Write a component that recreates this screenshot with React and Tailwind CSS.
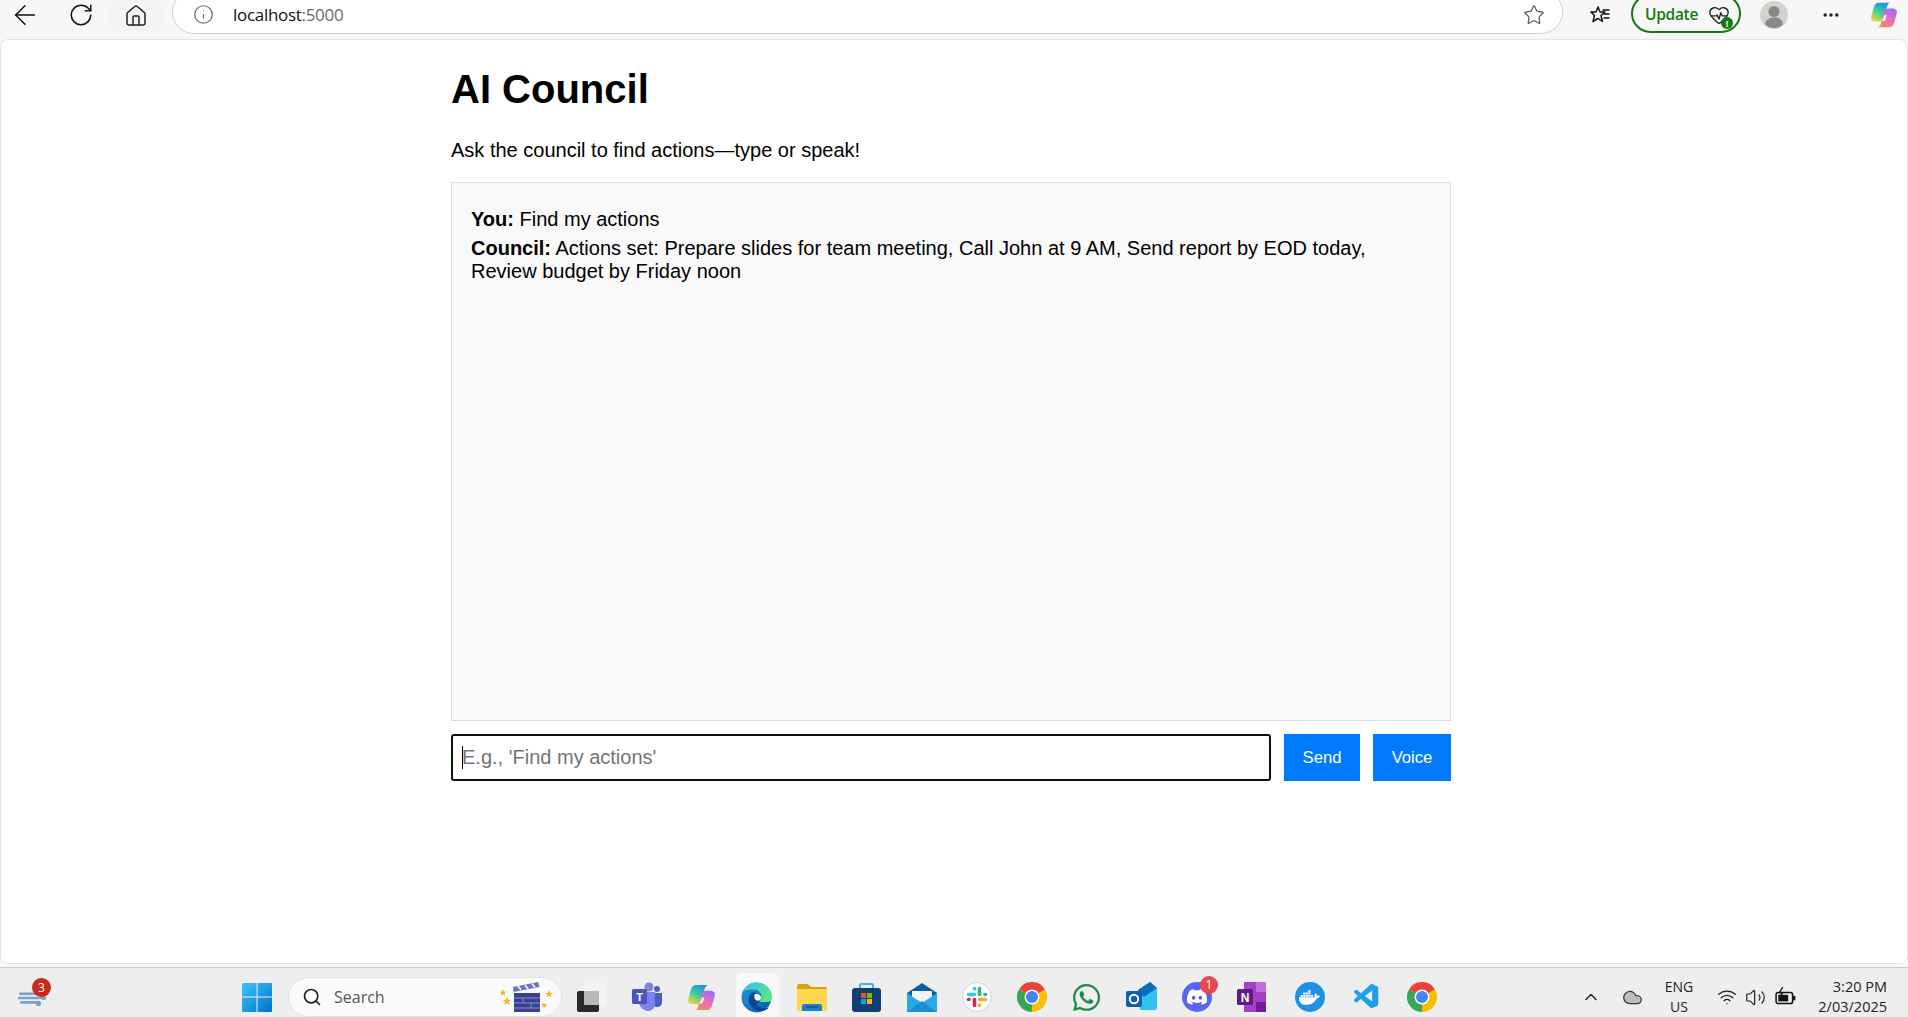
import { ArrowLeft, RotateCw, House, Info, Star, Ellipsis, HeartPulse, Search, ChevronUp, Cloud, Wifi, Volume2 } from "lucide-react"
import { FaWhatsapp, FaDiscord, FaDocker } from "react-icons/fa"
import { VscVscode } from "react-icons/vsc"

// Browser toolbar bits
const FavoritesIcon = () => (
  <svg width="20" height="20" viewBox="0 0 20 20" fill="none" stroke="#111" strokeWidth="1.5" strokeLinejoin="round">
    <path d="M8 2l2 5h5l-4 3.5 1.5 6L8 13.5 3 16.5l1.5-6L1 7h5z" />
    <path d="M13 5h6M14 9h5M14 13h5" strokeLinecap="round" />
  </svg>
)

const Avatar = () => (
  <svg width="28" height="28" viewBox="0 0 28 28">
    <circle cx="14" cy="14" r="14" fill="#d4d2cf" />
    <circle cx="14" cy="10.5" r="5.5" fill="#8a8886" />
    <path d="M5 23c1-5 5-6.5 9-6.5s8 1.5 9 6.5c-2 2.5-5.500 4-9 4s-7-1.500-9-4z" fill="#8a8886" />
  </svg>
)

const CopilotIcon = ({ id, size = 28 }) => (
  <svg width={size} height={size} viewBox="0 0 30 30">
    <defs>
      <linearGradient id={id + "a"} x1="0.7" y1="0" x2="0.2" y2="1">
        <stop offset="0" stopColor="#1f8fe8" />
        <stop offset="0.5" stopColor="#3fcf9a" />
        <stop offset="1" stopColor="#f5d63d" />
      </linearGradient>
      <linearGradient id={id + "b"} x1="0.7" y1="0" x2="0.3" y2="1">
        <stop offset="0" stopColor="#9a6cf0" />
        <stop offset="0.55" stopColor="#e86fc0" />
        <stop offset="1" stopColor="#fb8a4a" />
      </linearGradient>
    </defs>
    <path d="M9 2H21C19.500 3 18.500 5 18 7L14.500 19C14 21 12.500 22 10.500 22H5.500C2.500 22 .5 19.500 1.300 16.500L4 7C4.800 4 6.500 2 9 2z" fill={`url(#${id}a)`} />
    <path d="M21 28H9C10.500 27 11.500 25 12 23L15.500 11C16 9 17.500 8 19.500 8H24.500C27.500 8 29.500 10.500 28.700 13.500L26 23C25.200 26 23.500 28 21 28z" fill={`url(#${id}b)`} />
    <path d="M15.500 15h2.500l-1.500 5c-.3 1-1 1.500-2 1.500h-2z" fill="#fff" opacity="0.85" />
  </svg>
)

// Taskbar app icons
const WeatherIcon = () => (
  <svg width="28" height="22" viewBox="0 0 26 20" fill="none" stroke="#7f9fc4" strokeWidth="2.4" strokeLinecap="round">
    <path d="M2 7h16M1 11h24M3 15h15" />
    <circle cx="24" cy="11" r="2" fill="#7f9fc4" stroke="none" />
    <circle cx="19" cy="16" r="2.500" fill="#7f9fc4" stroke="none" />
  </svg>
)

const WindowsIcon = () => (
  <svg width="30" height="30" viewBox="0 0 30 30">
    <defs>
      <linearGradient id="win" x1="0" y1="0" x2="1" y2="1">
        <stop offset="0" stopColor="#3fc5f8" />
        <stop offset="1" stopColor="#0070d0" />
      </linearGradient>
    </defs>
    <path d="M1 1h13.500v13.500H0V2a1 1 0 0 1 1-1zM15.500 1H29a1 1 0 0 1 1 1v12.500H15.500zM0 15.500h14.500V30H1a1 1 0 0 1-1-1zM15.500 15.500H30V29a1 1 0 0 1-1 1H15.500z" fill="url(#win)" />
  </svg>
)

const ClapperIcon = () => (
  <svg width="56" height="30" viewBox="0 0 56 30">
    <g fill="#f2b632">
      <path d="M4 7l1 2.500 2.500.2-2 1.600.7 2.500L4 12.400l-2.200 1.400.7-2.500-2-1.600L3 9.500z" />
      <path d="M8 15l1.200 2.800 3 .2-2.300 1.900.8 3L8 21.300l-2.700 1.600.8-3L3.800 18l3-.2z" />
      <path d="M50 8l1.100 2.700 2.900.2-2.200 1.800.7 2.800L50 14l-2.500 1.500.7-2.800-2.200-1.800 2.900-.2z" />
      <path d="M45 20l.9 2.100 2.300.2-1.800 1.400.6 2.200L45 24.700l-2 1.200.6-2.200-1.800-1.400 2.300-.2z" />
    </g>
    <path d="M14 5l25-5 1.500 5-26 5z" fill="#6f73b8" />
    <path d="M19 4l3 4M26 3l3 4M33 1.500l3 4" stroke="#e8e8f4" strokeWidth="2" />
    <rect x="15" y="11" width="26" height="19" fill="#3b3f8f" />
    <path d="M15 16h26M15 21h26M15 26h26M24 16v5M32 21v5" stroke="#8d90cc" strokeWidth="1" />
  </svg>
)

const TaskViewIcon = () => (
  <svg width="29" height="29" viewBox="0 0 29 29">
    <rect x="7" y="0" width="22" height="22" rx="2" fill="#f4f4f4" />
    <rect x="0" y="8" width="22" height="21" rx="2" fill="#2a2a2a" />
    <rect x="7" y="8" width="15" height="14" fill="#b9b9b9" />
  </svg>
)

const TeamsIcon = () => (
  <svg width="30" height="30" viewBox="0 0 30 30">
    <circle cx="17" cy="5" r="4.500" fill="#7b83d6" />
    <circle cx="25" cy="7" r="3" fill="#5059c9" />
    <path d="M20 11h10v9c0 3-2 5-5 5-2 0-5-1-5-3z" fill="#5059c9" />
    <path d="M7 10h16v12c0 4-3 7-7 7s-7-3-9-7z" fill="#7b83eb" />
    <rect x="0" y="7" width="15" height="15" rx="1.500" fill="#4b53bc" />
    <text x="7.500" y="18.500" textAnchor="middle" fill="#fff" fontSize="11" fontWeight="700" fontFamily="Liberation Sans">T</text>
  </svg>
)

const EdgeIcon = () => (
  <svg width="31" height="31" viewBox="0 0 31 31">
    <defs>
      <linearGradient id="edgeA" x1="0" y1="0" x2="1" y2="1">
        <stop offset="0" stopColor="#1e9ae0" />
        <stop offset="1" stopColor="#0c59a4" />
      </linearGradient>
      <linearGradient id="edgeB" x1="0" y1="0" x2="1" y2="1">
        <stop offset="0" stopColor="#35c1f1" />
        <stop offset="1" stopColor="#66eb6e" />
      </linearGradient>
    </defs>
    <circle cx="15.500" cy="15.500" r="15" fill="url(#edgeA)" />
    <path d="M2 9C5 3 10 .5 15.500.5 24 .5 31 7 31 15c0 3-1.500 5-5 5h-6c-1 0-1.500-.5-1-1.500 1-1 1.500-2 1.500-3.500 0-4-3-7.500-7.500-7.500C8 7.500 4 8 2 9z" fill="url(#edgeB)" />
    <path d="M13 10c-4 1-6 5-5 10 1 5 6 9 12 9 3 0 6-1 8-3.500-2 .8-4 1-6 .5-4-.5-6-2.500-7-5 2 .8 3-.5 3-2 0-3-2-7-5-9z" fill="#0a4a8c" />
    <path d="M14 12c3-.5 6 1 6 4 0 1-1 2-2 2.500-2 .5-4-.5-4.500-2.500-.3-1.500-.2-3 .5-4z" fill="#fff" />
  </svg>
)

const FolderIcon = () => (
  <svg width="30" height="27" viewBox="0 0 30 27">
    <path d="M0 2a2 2 0 0 1 2-2h9l3 3h14a2 2 0 0 1 2 2v3H0z" fill="#d9a10c" />
    <path d="M0 5h30v22H0z" fill="#fdd64f" />
    <path d="M5 22a2 2 0 0 1 2-2h16a2 2 0 0 1 2 2v5H5z" fill="#1a7fd1" />
    <path d="M9 23h12" stroke="#0e4f8c" strokeWidth="1.500" />
  </svg>
)

const StoreIcon = () => (
  <svg width="29" height="29" viewBox="0 0 29 29">
    <path d="M8 5V2a1 1 0 0 1 1-1h11a1 1 0 0 1 1 1v3" fill="none" stroke="#38b6ee" strokeWidth="2" />
    <rect x="0" y="5" width="29" height="24" rx="3" fill="#123f73" />
    <rect x="9" y="10" width="5" height="5" fill="#f25022" />
    <rect x="15" y="10" width="5" height="5" fill="#7fba00" />
    <rect x="9" y="16" width="5" height="5" fill="#00a4ef" />
    <rect x="15" y="16" width="5" height="5" fill="#ffb900" />
  </svg>
)

const MailIcon = () => (
  <svg width="30" height="29" viewBox="0 0 30 29">
    <path d="M0 10L15 0l15 10v3H0z" fill="#0d5ca8" />
    <path d="M5 8h20v9H5z" fill="#f4f4f4" />
    <path d="M0 10l15 10 15-10v19H0z" fill="#29a8ea" />
    <path d="M0 29l15-11 15 11z" fill="#1b8ed6" />
  </svg>
)

const SlackIcon = () => (
  <svg width="30" height="30" viewBox="0 0 30 30" strokeLinecap="round" strokeWidth="3.600">
    <circle cx="15" cy="15" r="14.500" fill="#fff" stroke="#d2d2d2" strokeWidth="1" />
    <path d="M6.500 12.500h6" stroke="#36c5f0" />
    <path d="M12.500 6.500v.5" stroke="#36c5f0" />
    <path d="M17.500 6.500v6" stroke="#2eb67d" />
    <path d="M23.500 12.500H23" stroke="#2eb67d" />
    <path d="M17.500 17.500h6" stroke="#ecb22e" />
    <path d="M17.500 23.500V23" stroke="#ecb22e" />
    <path d="M12.500 17.500v6" stroke="#e01e5a" />
    <path d="M6.500 17.500H7" stroke="#e01e5a" />
  </svg>
)

const ChromeIcon = () => (
  <svg width="30" height="30" viewBox="0 0 30 30">
    <path d="M15 15L2 7.500A15 15 0 0 1 28 7.500z" fill="#ea4335" />
    <path d="M15 15L28 7.500A15 15 0 0 1 15 30z" fill="#fbbc04" />
    <path d="M15 15L15 30A15 15 0 0 1 2 7.500z" fill="#34a853" />
    <circle cx="15" cy="15" r="7.500" fill="#fff" />
    <circle cx="15" cy="15" r="6" fill="#4285f4" />
  </svg>
)

const OutlookIcon = () => (
  <svg width="31" height="30" viewBox="0 0 31 30">
    <path d="M12 8L24 0l7 6v20a2 2 0 0 1-2 2H14z" fill="#33c3f3" />
    <path d="M12 8L24 0l7 6-13 9z" fill="#0f6cbd" />
    <rect x="0" y="9" width="16" height="16" rx="2" fill="#0f5fae" />
    <circle cx="8" cy="17" r="4.200" fill="none" stroke="#fff" strokeWidth="2" />
  </svg>
)

const DiscordIcon = () => (
  <span className="flex h-[30px] w-[30px] items-center justify-center rounded-full bg-[#5865f2]">
    <FaDiscord size={22} color="#fff" />
  </span>
)

const OneNoteIcon = () => (
  <svg width="29" height="30" viewBox="0 0 29 30">
    <path d="M7 0h20a2 2 0 0 1 2 2v26a2 2 0 0 1-2 2H7z" fill="#a33fc4" />
    <path d="M19 0h10v10H19z" fill="#c06fdc" />
    <path d="M19 20h10v10H19z" fill="#6f1e99" />
    <rect x="0" y="7" width="16" height="16" rx="1.500" fill="#5d1b84" />
    <text x="8" y="19.500" textAnchor="middle" fill="#fff" fontSize="12" fontWeight="700" fontFamily="Liberation Sans">N</text>
  </svg>
)

const DockerIcon = () => (
  <span className="flex h-[30px] w-[30px] items-center justify-center rounded-full bg-[#1d91e5]">
    <FaDocker size={21} color="#fff" />
  </span>
)

const CodeIcon = () => <VscVscode size={30} color="#1f9fe8" />

const WhatsAppIcon = () => <FaWhatsapp size={31} color="#1e8a4c" />

const BatteryIcon = () => (
  <svg width="22" height="20" viewBox="0 0 20 18" fill="none" stroke="#111" strokeWidth="1.400">
    <rect x="1" y="5" width="15" height="10" rx="2" />
    <rect x="3" y="7" width="9" height="6" fill="#111" stroke="none" />
    <path d="M17.500 8v4" strokeWidth="2" />
    <path d="M7 0L4 5h3L5 8" strokeWidth="1.200" />
  </svg>
)

const taskbarApps = [
  { name: "Teams", icon: <TeamsIcon /> },
  { name: "Copilot", icon: <CopilotIcon id="tb" size={29} /> },
  { name: "Edge", icon: <EdgeIcon />, active: true },
  { name: "Explorer", icon: <FolderIcon /> },
  { name: "Store", icon: <StoreIcon /> },
  { name: "Mail", icon: <MailIcon /> },
  { name: "Slack", icon: <SlackIcon /> },
  { name: "Chrome", icon: <ChromeIcon /> },
  { name: "WhatsApp", icon: <WhatsAppIcon /> },
  { name: "Outlook", icon: <OutlookIcon /> },
  { name: "Discord", icon: <DiscordIcon />, badge: "1" },
  { name: "OneNote", icon: <OneNoteIcon /> },
  { name: "Docker", icon: <DockerIcon />, gap: "ml-[3px]" },
  { name: "VS Code", icon: <CodeIcon />, gap: "ml-[2px]" },
  { name: "Chrome 2", icon: <ChromeIcon /> },
]

const Toolbar = () => (
  <div className="flex h-[39px] shrink-0 items-center overflow-hidden bg-[#f7f7f7] pb-[9px] font-['Open_Sans',sans-serif]">
    <ArrowLeft className="ml-[9px] shrink-0" size={32} strokeWidth={1.1} color="#111" />
    <RotateCw className="ml-[27px] shrink-0" size={26} strokeWidth={1.4} color="#111" />
    <div className="ml-[16px] flex h-[32px] w-[52px] shrink-0 items-center justify-center self-start rounded-md bg-[#f4f4f4]">
      <House size={24} strokeWidth={1.5} color="#222" />
    </div>
    <div className="ml-[10px] -mt-[10px] flex h-[44px] w-[1391px] shrink-0 items-center self-start rounded-full border border-[#d0d0d0] bg-white pt-[5px]">
      <Info className="ml-[20px]" size={21} strokeWidth={1.4} color="#666" />
      <span className="ml-[19px] text-[17px] leading-none tracking-[-0.3px] text-[#111]">
        localhost<span className="text-[#6b6b6b]">:5000</span>
      </span>
      <Star className="ml-auto mr-[17px]" size={22} strokeWidth={1.3} color="#555" />
    </div>
    <div className="ml-[27px] shrink-0">
      <FavoritesIcon />
    </div>
    <div className="ml-[21px] -mt-[6px] flex h-[39px] w-[110px] shrink-0 items-center self-start rounded-full border-2 border-[#107c10] pl-[12px] pt-[3px]">
      <span className="text-[15.5px] font-semibold leading-none tracking-[-0.3px] text-[#107c10]">Update</span>
      <span className="relative ml-[10px] flex">
        <HeartPulse size={22} strokeWidth={1.5} color="#222" />
        <span className="absolute -bottom-[3px] -right-[3px] flex h-[12px] w-[12px] items-center justify-center rounded-full bg-[#107c10] text-[9px] font-bold leading-none text-white">!</span>
      </span>
    </div>
    <div className="ml-[19px] shrink-0">
      <Avatar />
    </div>
    <Ellipsis className="ml-[33px] shrink-0" size={20} strokeWidth={2.2} color="#222" />
    <div className="ml-[29px] shrink-0">
      <CopilotIcon id="top" />
    </div>
  </div>
)

const ChatPage = () => (
  <div className="min-h-0 flex-1 rounded-lg border border-[#e4e4e4] bg-white font-['Liberation_Sans',Arial,sans-serif] text-black">
    <div className="mx-auto w-[1000px] translate-x-[-3px]">
      <h1 className="pt-[26px] text-[40px] font-bold leading-[46px]">AI Council</h1>
      <p className="mt-[27px] text-[20px] leading-[23px]">Ask the council to find actions—type or speak!</p>
      <div className="mt-[20px] h-[539px] border border-[#dddddd] bg-[#f9f9f9] px-[19px] py-[20px] text-[20px]">
        <div className="mb-[6px] mt-[5px] leading-[23px]">
          <strong>You:</strong> Find my actions
        </div>
        <div className="leading-[23px]">
          <strong>Council:</strong> Actions set: Prepare slides for team meeting, Call John at 9 AM, Send report by EOD today, Review budget by Friday noon
        </div>
      </div>
      <div className="mt-[13px] flex h-[47px] gap-[13px]">
        <div className="relative flex-1">
          <input
            className="h-full w-full rounded-[3px] border-[2.5px] border-[#101010] bg-white px-[9px] text-[20px] text-black outline-none placeholder:text-[#757575]"
            placeholder="E.g., 'Find my actions'"
            readOnly
          />
          <span className="absolute left-[11px] top-[12px] h-[23px] w-px bg-black" />
        </div>
        <button className="w-[76px] bg-[#007bff] pb-[1px] text-[16.67px] text-white">Send</button>
        <button className="w-[78px] bg-[#007bff] pb-[1px] text-[16.67px] text-white">Voice</button>
      </div>
    </div>
  </div>
)

const Taskbar = () => (
  <div className="mt-[3px] flex h-[50px] shrink-0 items-center border-t border-[#c9c9c9] bg-[#eeeeee] pt-[9px] font-['Open_Sans',sans-serif]">
    <div className="relative ml-[18px] flex w-[224px] shrink-0 items-center">
      <WeatherIcon />
      <span className="absolute -top-[8px] left-[14px] flex h-[19px] w-[19px] items-center justify-center rounded-full bg-[#c42b1c] text-[12px] leading-none text-white">3</span>
    </div>
    <div className="shrink-0">
      <WindowsIcon />
    </div>
    <div className="ml-[16px] flex h-[40px] w-[274px] shrink-0 items-center rounded-full border border-[#e2e2e2] bg-[#fafafa] pl-[13px]">
      <Search size={20} strokeWidth={2} color="#222" />
      <span className="ml-[12px] text-[16px] leading-none text-[#555]">Search</span>
      <span className="ml-auto mr-[6px] flex">
        <ClapperIcon />
      </span>
    </div>
    <div className="ml-[15px] shrink-0">
      <TaskViewIcon />
    </div>
    <div className="ml-[13px] flex shrink-0">
      {taskbarApps.map((app) => (
        <div key={app.name} className={`relative flex h-[41px] w-[55px] items-center justify-center ${app.gap || ""}`}>
          {app.active && <span className="absolute -top-[4px] bottom-0 left-[7px] right-[4px] rounded-t-md border-r-4 border-[#f4f4f4] bg-[#f9f9f9]" />}
          <span className="relative flex">{app.icon}</span>
          {app.badge && (
            <span className="absolute -top-[1px] left-[31px] flex h-[18px] w-[18px] items-center justify-center rounded-full bg-[#e5484d] text-[12px] leading-none text-white">{app.badge}</span>
          )}
        </div>
      ))}
    </div>
    <ChevronUp className="ml-[132px] shrink-0" size={20} strokeWidth={1.8} color="#222" />
    <Cloud className="ml-[21px] shrink-0" size={21} strokeWidth={1.4} fill="#bdbdbd" color="#333" />
    <div className="ml-[21px] flex w-[30px] shrink-0 flex-col items-center text-[14px] leading-[20px] text-[#222]">
      <span>ENG</span>
      <span>US</span>
    </div>
    <Wifi className="ml-[23px] shrink-0" size={20} strokeWidth={1.6} color="#222" />
    <Volume2 className="ml-[8px] shrink-0" size={21} strokeWidth={1.4} color="#222" />
    <div className="ml-[9px] shrink-0">
      <BatteryIcon />
    </div>
    <div className="ml-auto mr-[21px] flex shrink-0 flex-col items-end text-[14.5px] leading-[20px] text-[#222]">
      <span>3:20 PM</span>
      <span>2/03/2025</span>
    </div>
  </div>
)

export default function App() {
  return (
    <div className="flex h-screen w-full flex-col overflow-hidden bg-[#f7f7f7]">
      <Toolbar />
      <ChatPage />
      <Taskbar />
    </div>
  )
}
